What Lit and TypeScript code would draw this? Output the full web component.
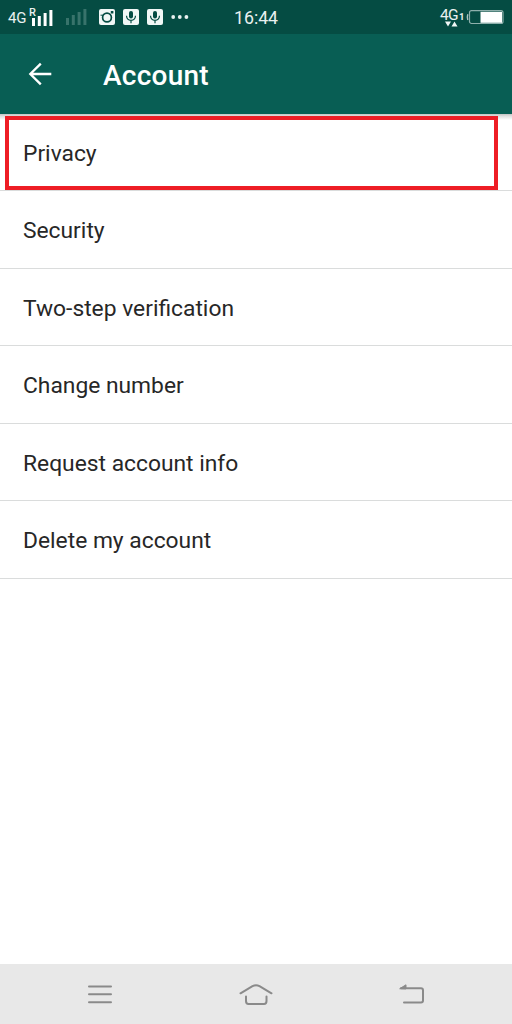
import { LitElement, html, svg, css } from "lit";
import { customElement, property } from "lit/decorators.js";

@customElement("signal-bars")
class SignalBars extends LitElement {
  @property({ type: Array }) heights: number[] = [];
  static styles = css`
    :host { display: block; height: 17px; }
    svg { display: block; fill: currentColor; }
  `;
  render() {
    return html`<svg width="22" height="17" viewBox="0 0 22 17">
      ${this.heights.map((h, i) => svg`<rect x=${i * 5.8} y=${17 - h} width="3" height=${h} />`)}
    </svg>`;
  }
}

@customElement("status-bar")
class StatusBar extends LitElement {
  static styles = css`
    :host {
      display: grid;
      grid-template-columns: 234px 1fr auto;
      height: 34px;
      box-sizing: border-box;
      padding-right: 8px;
      background: #054c43;
      color: #e9f1f0;
      font-family: Roboto, sans-serif;
    }
    .left, .right { display: flex; align-items: flex-start; }
    .left { padding-left: 8px; }
    .net { font-size: 15px; line-height: 18px; margin-top: 8.500px; width: 21px; letter-spacing: -0.2px; }
    .roam { font-size: 11px; line-height: 10px; margin-top: 8px; width: 3px; font-weight: 500; }
    .bars { margin-top: 9px; color: #fff; }
    .dim { color: #38736b; margin: 8px 0 0 12px; }
    .app { display: block; width: 16px; height: 16px; margin: 9px 0 0 8px; }
    .first { margin-left: 11px; }
    .dots { display: block; margin: 15px 0 0 8px; }
    .clock { font-size: 17.7px; line-height: 20px; margin-top: 8px; }
    .mobile { width: 19px; margin-top: 7px; }
    .mobile span { display: block; font-size: 15.500px; line-height: 17px; letter-spacing: -0.7px; }
    .arrows { display: block; margin: -3px 0 0 5px; }
    .slot { font-size: 9.5px; line-height: 12px; margin-top: 11px; width: 5px; font-weight: 700; }
    .battery { display: block; margin: 9px 0 0 2px; }
  `;
  mic() {
    return html`<svg class="app" viewBox="0 0 16 16">
      <rect width="16" height="16" rx="2" fill="#f1f7f6" />
      <rect x="6" y="2" width="4" height="7.600" rx="2" fill="#054c43" />
      <path d="M3.500 6.800c.2 3 2 4.500 4.500 4.500s4.300-1.500 4.500-4.500M8 11.300v2.900" fill="none" stroke="#054c43" stroke-width="1.200" />
    </svg>`;
  }
  render() {
    return html`
      <div class="left">
        <span class="net">4G</span><span class="roam">R</span>
        <signal-bars class="bars" .heights=${[8, 10, 13, 16]}></signal-bars>
        <signal-bars class="bars dim" .heights=${[7, 10, 13, 16]}></signal-bars>
        <svg class="app first" viewBox="0 0 16 16">
          <rect width="16" height="16" rx="2" fill="#f1f7f6" />
          <path d="M1.500 6.200h2.500" stroke="#054c43" stroke-width="1" />
          <circle cx="8" cy="8.500" r="4.400" fill="none" stroke="#054c43" stroke-width="1.700" />
          <rect x="11.800" y="2" width="2.600" height="2.600" rx=".6" fill="#054c43" />
        </svg>
        ${this.mic()}${this.mic()}
        <svg class="dots" width="18" height="4" viewBox="0 0 18 4" fill="#e9f1f0">
          <circle cx="2.200" cy="2" r="1.900" /><circle cx="8.800" cy="2" r="1.900" /><circle cx="15.400" cy="2" r="1.900" />
        </svg>
      </div>
      <span class="clock">16:44</span>
      <div class="right">
        <div class="mobile">
          <span>4G</span>
          <svg class="arrows" width="13" height="6" viewBox="0 0 13 6" fill="#f1f7f6">
            <path d="M0 .5h6L3 5.500zM6.500 5.500h6l-3-5z" />
          </svg>
        </div>
        <span class="slot">1</span>
        <svg class="battery" width="38" height="16" viewBox="0 0 38 16">
          <rect x="3.500" y="1.700" width="33.500" height="12.800" rx="2" fill="none" stroke="#8eb0ac" stroke-width="1.200" />
          <path d="M1.800 5.200Q.8 8 1.800 11" fill="none" stroke="#a9c2bf" stroke-width="1.400" />
          <rect x="14.500" y="2.800" width="21.500" height="11" fill="#fff" />
        </svg>
      </div>`;
  }
}

@customElement("title-bar")
class TitleBar extends LitElement {
  static styles = css`
    :host {
      display: flex;
      align-items: center;
      height: 80px;
      box-sizing: border-box;
      padding: 3px 0 0 28px;
      background: #085e54;
      color: #fff;
      font-family: Roboto, sans-serif;
    }
    svg { display: block; width: 24px; height: 24px; margin-top: -3px; }
    h1 { margin: 0 0 0 51px; font-size: 28px; line-height: 36px; font-weight: 500; letter-spacing: 0.25px; }
  `;
  render() {
    return html`
      <svg viewBox="0 0 24 24" fill="none" stroke="#fff" stroke-width="2.300">
        <path d="M23.300 12H2.500M12.800 1.600L2.300 12l10.500 10.400" />
      </svg>
      <h1>Account</h1>`;
  }
}

@customElement("nav-bar")
class NavBar extends LitElement {
  static styles = css`
    :host {
      display: grid;
      grid-template-columns: 200px 112px 200px;
      place-items: center;
      height: 60px;
      background: #e8e8e8;
    }
    svg { display: block; fill: none; stroke: #8a8a8a; stroke-width: 2; stroke-linecap: round; stroke-linejoin: round; }
  `;
  render() {
    return html`
      <svg width="26" height="22" viewBox="0 0 26 22"><path d="M2 3.500h22M2 11.200h22M2 19.200h22" /></svg>
      <svg width="36" height="24" viewBox="0 0 36 24">
        <path d="M2.500 11.300L14.500 4.200Q18 2.400 21.500 4.200L33.500 11.300M8 14.500V19Q8 22 10.500 22H26Q28.500 22 28.500 19V14.500" />
      </svg>
      <svg width="28" height="22" viewBox="0 0 28 22">
        <path d="M3 5.300H23Q25 5.300 25 7.300V17.500Q25 19.500 23 19.500H6" />
        <path d="M2 5.500L8 1.800V5.500Z" fill="#8a8a8a" stroke-width="1" />
      </svg>`;
  }
}

@customElement("app-root")
class AppRoot extends LitElement {
  static styles = css`
    :host {
      display: flex;
      flex-direction: column;
      height: 1024px;
      background: #fff;
      font-family: Roboto, sans-serif;
      color: #272727;
    }
    main {
      flex: 1;
      background: linear-gradient(#c3c3c3, #dedede 2px, #fff 6px);
    }
    ul { list-style: none; margin: 0; padding: 0; }
    li {
      position: relative;
      display: flex;
      align-items: center;
      height: 77.500px;
      box-sizing: border-box;
      padding: 3px 23px 0;
      border-bottom: 1px solid #dadcdc;
      font-size: 22.800px;
    }
    li:first-child { height: 77px; padding-top: 2px; }
    .mark {
      position: absolute;
      left: 5px;
      top: 2px;
      width: 493px;
      height: 74px;
      box-sizing: border-box;
      border: 4px solid #ee1d25;
      background: transparent;
    }
  `;
  items = ["Privacy", "Security", "Two-step verification", "Change number", "Request account info", "Delete my account"];
  render() {
    return html`
      <status-bar></status-bar>
      <title-bar></title-bar>
      <main>
        <ul>
          ${this.items.map((label, i) => html`<li>${label}${i === 0 ? html`<span class="mark"></span>` : ""}</li>`)}
        </ul>
      </main>
      <nav-bar></nav-bar>`;
  }
}
